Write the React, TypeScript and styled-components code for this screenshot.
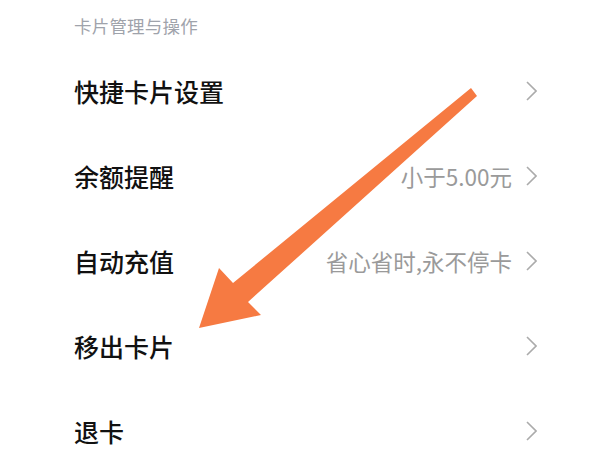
import React from "react";
import styled, { createGlobalStyle } from "styled-components";

const GlobalStyle = createGlobalStyle`
  html, body {
    margin: 0;
    padding: 0;
    background: #ffffff;
  }
  body {
    font-family: "Noto Sans CJK SC", "Noto Sans", sans-serif;
  }
`;

const Page = styled.div`
  position: relative;
  width: 602px;
  height: 455px;
  overflow: hidden;
  background: #ffffff;
`;

const List = styled.div`
  display: flex;
  flex-direction: column;
  padding: 0 65px 0 74px;
`;

const SectionTitle = styled.div`
  height: 48px;
  padding-top: 2px;
  box-sizing: border-box;
  display: flex;
  align-items: center;
  font-size: 17.5px;
  color: #9fa3ab;
  letter-spacing: 0.2px;
`;

const Row = styled.div`
  height: 85px;
  display: flex;
  align-items: center;
  justify-content: space-between;
`;

const Label = styled.span`
  font-size: 25px;
  font-weight: 500;
  color: #111111;
`;

const Right = styled.div`
  display: flex;
  align-items: center;
  gap: 14px;
`;

const Value = styled.span`
  font-size: 22.5px;
  color: #9a9a9a;
`;

const Chevron = () => (
  <svg width="11" height="20" viewBox="0 0 11 20">
    <polyline
      points="1,1 10,10 1,19"
      fill="none"
      stroke="#ababab"
      strokeWidth="1.6"
    />
  </svg>
);

const ArrowLayer = styled.svg`
  position: absolute;
  top: 0;
  left: 0;
  pointer-events: none;
`;

const items = [
  { label: "快捷卡片设置" },
  { label: "余额提醒", value: "小于5.00元" },
  { label: "自动充值", value: "省心省时,永不停卡" },
  { label: "移出卡片" },
  { label: "退卡" },
];

function App() {
  return (
    <Page>
      <GlobalStyle />
      <List>
        <SectionTitle>卡片管理与操作</SectionTitle>
        {items.map((it) => (
          <Row key={it.label}>
            <Label>{it.label}</Label>
            <Right>
              {it.value && <Value>{it.value}</Value>}
              <Chevron />
            </Right>
          </Row>
        ))}
      </List>
      <ArrowLayer width="602" height="455" viewBox="0 0 602 455">
        <polygon
          points="471,88 477,96 248,302 261,315 199,328 219,268 233,283"
          fill="#f67a42"
        />
      </ArrowLayer>
    </Page>
  );
}

export default App;
